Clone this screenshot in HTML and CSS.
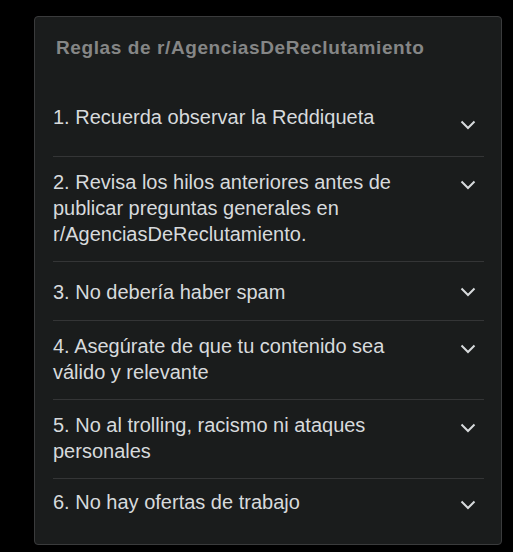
FILE: index.html
```html
<!DOCTYPE html>
<html lang="es">
<head>
    <meta charset="UTF-8">
    <meta name="viewport" content="width=device-width, initial-scale=1.0">
    <title>Reglas de r/AgenciasDeReclutamiento</title>
    <link rel="stylesheet" href="styles.css">
</head>
<body>
    <div class="rules-card">
        <h2 class="rules-title">Reglas de r/AgenciasDeReclutamiento</h2>

        <ul class="rules">
            <li class="rule rule-first">
                <span class="rule-text">1. Recuerda observar la Reddiqueta</span>
                <span class="chevron chevron-low"><svg width="20" height="26" viewBox="0 0 20 26"><path d="M3.5 10.5 L10 17 L16.5 10.5" /></svg></span>
            </li>
            <li class="rule">
                <span class="rule-text">2. Revisa los hilos anteriores antes de publicar preguntas generales en r/AgenciasDeReclutamiento.</span>
                <span class="chevron"><svg width="20" height="26" viewBox="0 0 20 26"><path d="M3.5 10.5 L10 17 L16.5 10.5" /></svg></span>
            </li>
            <li class="rule rule-short">
                <span class="rule-text">3. No debería haber spam</span>
                <span class="chevron chevron-high"><svg width="20" height="26" viewBox="0 0 20 26"><path d="M3.5 10.5 L10 17 L16.5 10.5" /></svg></span>
            </li>
            <li class="rule">
                <span class="rule-text">4. Asegúrate de que tu contenido sea válido y relevante</span>
                <span class="chevron"><svg width="20" height="26" viewBox="0 0 20 26"><path d="M3.5 10.5 L10 17 L16.5 10.5" /></svg></span>
            </li>
            <li class="rule">
                <span class="rule-text">5. No al trolling, racismo ni ataques personales</span>
                <span class="chevron"><svg width="20" height="26" viewBox="0 0 20 26"><path d="M3.5 10.5 L10 17 L16.5 10.5" /></svg></span>
            </li>
            <li class="rule rule-last">
                <span class="rule-text">6. No hay ofertas de trabajo</span>
                <span class="chevron"><svg width="20" height="26" viewBox="0 0 20 26"><path d="M3.5 10.5 L10 17 L16.5 10.5" /></svg></span>
            </li>
        </ul>
    </div>
</body>
</html>
```

FILE: styles.css
```css
body {
    margin: 0;
    padding: 16px 12px 0 34px;
    background-color: #000;
    font-family: "Liberation Sans", Arial, sans-serif;
}
.rules-card {
    width: 468px;
    background-color: #1a1c1c;
    border: 1px solid #3a3b3c;
    border-radius: 4px;
    padding: 20px 17px 11px 18px;
    box-sizing: border-box;
    min-height: 529px;
}
.rules-title {
    margin: 0 0 32px 3px;
    font-size: 19px;
    line-height: 22px;
    font-weight: bold;
    letter-spacing: 0.6px;
    color: #858686;
}
.rules {
    list-style: none;
    margin: 0;
    padding: 0;
}
.rule {
    display: flex;
    align-items: flex-start;
    gap: 40px;
    padding: 12px 0 14px;
    border-bottom: 1px solid #343536;
    font-size: 20px;
    line-height: 26px;
    color: #d7dadc;
}
.rule:last-child {
    border-bottom: none;
}
/* the chevron in row one sits lower and makes the row 33px tall */
.rule-first {
    padding: 13px 0 19px;
}
.rule-short {
    padding: 17px 0 15px;
}
.rule-last {
    padding-top: 10px;
}
.rule-text {
    flex: 1;
}
.chevron {
    width: 20px;
    height: 26px;
    margin-right: 6px;
    margin-top: 2px;
}
.chevron-low {
    margin-top: 7px;
}
.chevron-high {
    margin-top: -1px;
}
.chevron svg {
    display: block;
}
.chevron path {
    fill: none;
    stroke: #d7dadc;
    stroke-width: 2;
}
```
